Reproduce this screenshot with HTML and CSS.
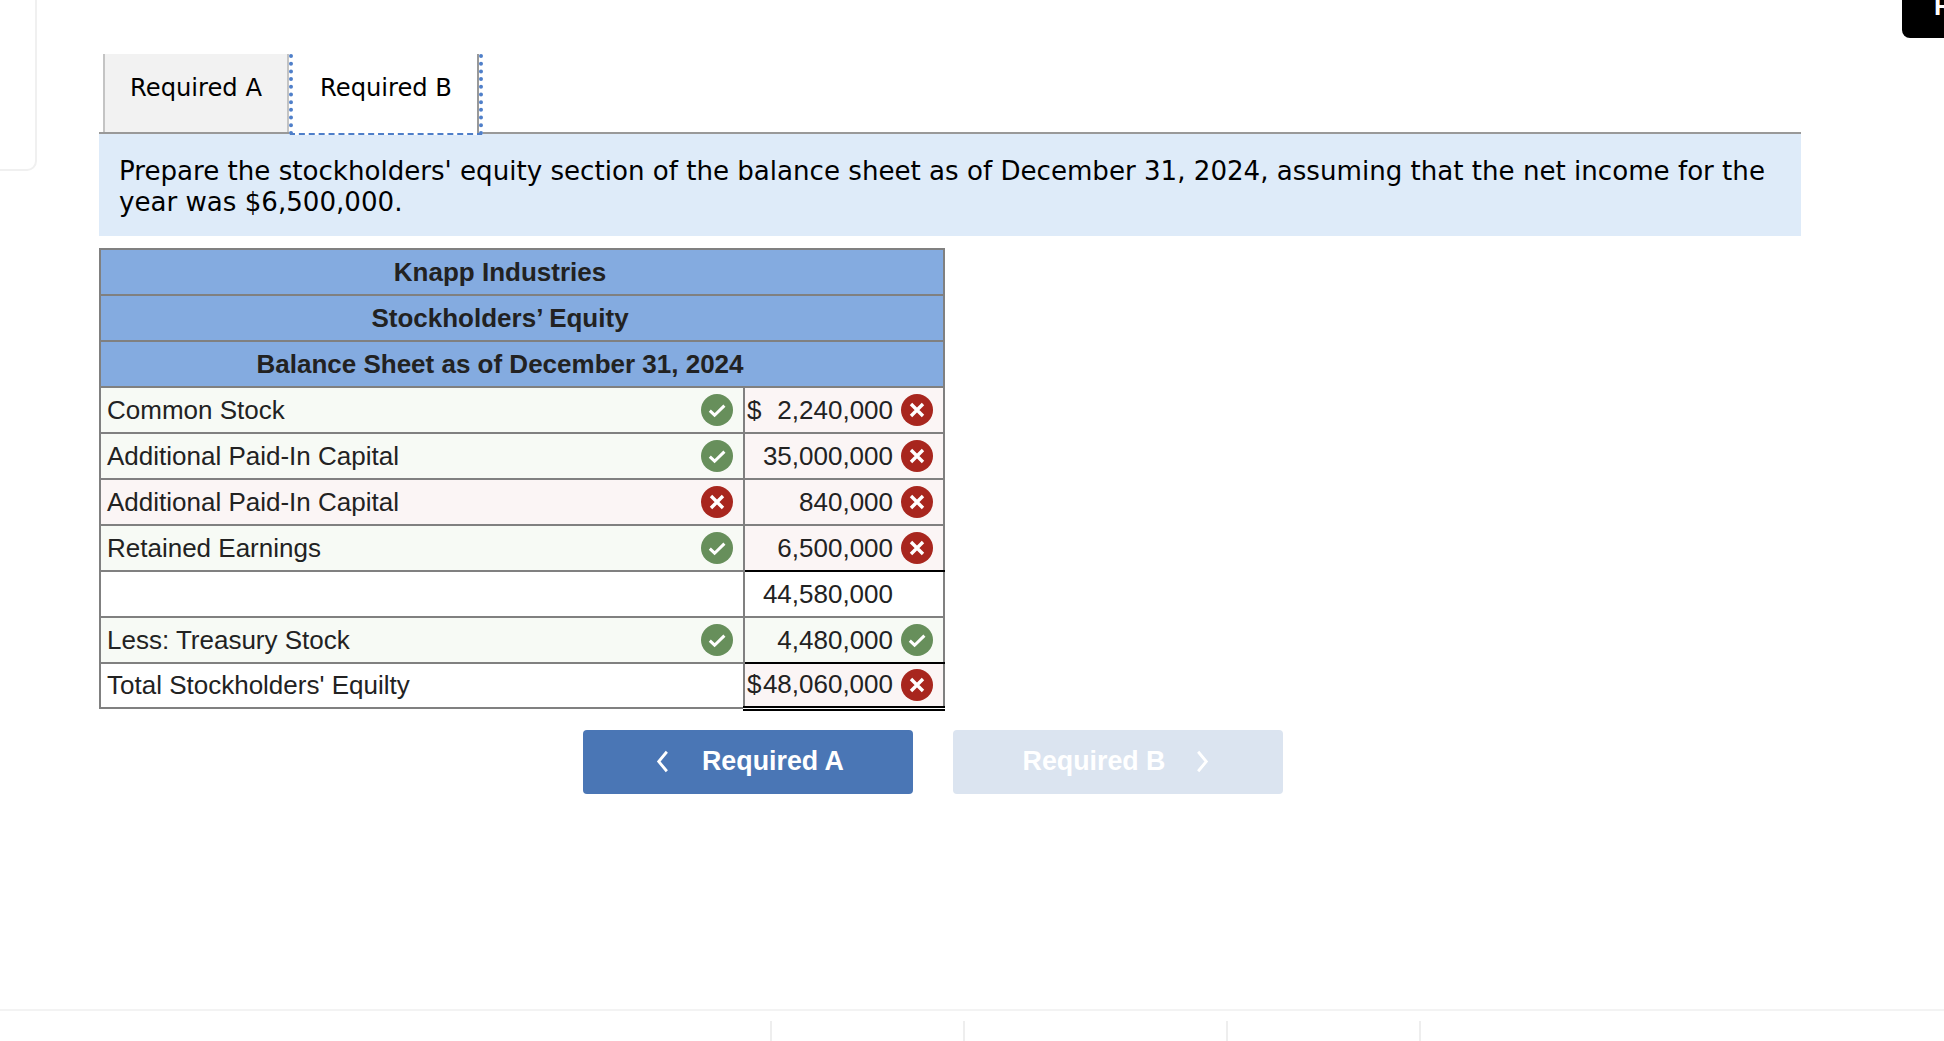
FILE: index.html
```html
<!DOCTYPE html>
<html lang="en">
<head>
<meta charset="utf-8">
<title>Required B</title>
<link rel="stylesheet" href="styles.css">
</head>
<body>
<svg class="defs" width="0" height="0" aria-hidden="true">
  <symbol id="ok" viewBox="0 0 32 32"><circle cx="16" cy="16" r="16" fill="#678f5b"/><path d="M8.8 16.6l4.8 4.6 9.8-9.6" fill="none" stroke="#fff" stroke-width="3"/></symbol>
  <symbol id="bad" viewBox="0 0 32 32"><circle cx="16" cy="16" r="16" fill="#a8261e"/><path d="M10 10l12 12M22 10L10 22" fill="none" stroke="#fff" stroke-width="3.4"/></symbol>
</svg>
<div class="side-card"></div>
<div class="corner-btn"><span>R</span></div>
<main class="main">
  <div class="tabs">
    <div class="tab tab-a">Required A</div>
    <div class="tab tab-b">Required B</div>
  </div>
  <div class="prompt">Prepare the stockholders' equity section of the balance sheet as of December 31, 2024, assuming that the net income for the year was $6,500,000.</div>
  <table class="sheet">
    <colgroup><col class="c-label"><col class="c-value"></colgroup>
    <thead>
      <tr><th colspan="2">Knapp Industries</th></tr>
      <tr><th colspan="2">Stockholders’ Equity</th></tr>
      <tr><th colspan="2">Balance Sheet as of December 31, 2024</th></tr>
    </thead>
    <tbody>
      <tr>
        <td class="label good"><div class="cell"><span>Common Stock</span><svg class="mark"><use href="#ok"/></svg></div></td>
        <td class="value wrong"><div class="cell"><span class="cur">$</span><span class="num">2,240,000</span><svg class="mark"><use href="#bad"/></svg></div></td>
      </tr>
      <tr>
        <td class="label good"><div class="cell"><span>Additional Paid-In Capital</span><svg class="mark"><use href="#ok"/></svg></div></td>
        <td class="value wrong"><div class="cell"><span class="num">35,000,000</span><svg class="mark"><use href="#bad"/></svg></div></td>
      </tr>
      <tr>
        <td class="label wrong"><div class="cell"><span>Additional Paid-In Capital</span><svg class="mark"><use href="#bad"/></svg></div></td>
        <td class="value wrong"><div class="cell"><span class="num">840,000</span><svg class="mark"><use href="#bad"/></svg></div></td>
      </tr>
      <tr>
        <td class="label good"><div class="cell"><span>Retained Earnings</span><svg class="mark"><use href="#ok"/></svg></div></td>
        <td class="value wrong rule-b"><div class="cell"><span class="num">6,500,000</span><svg class="mark"><use href="#bad"/></svg></div></td>
      </tr>
      <tr>
        <td class="label"></td>
        <td class="value"><div class="cell"><span class="num">44,580,000</span><span class="mark"></span></div></td>
      </tr>
      <tr>
        <td class="label good"><div class="cell"><span>Less: Treasury Stock</span><svg class="mark"><use href="#ok"/></svg></div></td>
        <td class="value good rule-b"><div class="cell"><span class="num">4,480,000</span><svg class="mark"><use href="#ok"/></svg></div></td>
      </tr>
      <tr class="last">
        <td class="label"><div class="cell"><span>Total Stockholders' Equilty</span></div></td>
        <td class="value wrong total"><div class="cell"><span class="cur tight">$</span><span class="num">48,060,000</span><svg class="mark"><use href="#bad"/></svg></div></td>
      </tr>
    </tbody>
  </table>
  <div class="nav">
    <button class="nav-btn prev" type="button">
      <svg class="chev" viewBox="0 0 12 20"><path d="M10 1L2.5 10l7.5 9" fill="none" stroke="#fff" stroke-width="2.6"/></svg>
      <span>Required A</span>
    </button>
    <button class="nav-btn next" type="button">
      <span>Required B</span>
      <svg class="chev" viewBox="0 0 12 20"><path d="M2 1l7.5 9L2 19" fill="none" stroke="#fff" stroke-width="2.6"/></svg>
    </button>
  </div>
</main>
<footer class="foot">
  <i class="tick"></i><i class="tick"></i><i class="tick"></i><i class="tick"></i>
</footer>
</body>
</html>
```

FILE: styles.css
```css
* { box-sizing: border-box; }
html, body { margin: 0; height: 1041px; overflow: hidden; background: #fff; }
body { position: relative; font-family: "Liberation Sans", Arial, sans-serif; color: #222; }
.defs { position: absolute; }

.side-card {
  position: absolute; left: -20px; top: -20px; width: 57px; height: 191px;
  border: 2px solid #f0f0f0; border-radius: 10px;
}
.corner-btn {
  position: absolute; right: 0; top: 0; width: 42px; height: 38px; overflow: hidden;
  background: #000; border-bottom-left-radius: 8px;
}
.corner-btn span {
  position: absolute; left: 32px; top: -9px; color: #fff;
  font-size: 26px; font-weight: 700; line-height: 30px;
}

.main { width: 1801px; height: 1009px; padding: 54px 0 0 99px; }

.tabs { display: flex; height: 78px; padding-left: 4px; }
.tab {
  font-family: "DejaVu Sans", Verdana, sans-serif; font-size: 24.2px; line-height: 30px; color: #000;
  padding-top: 19px; height: 78px; text-align: center;
}
.tab-a { width: 186px; background: #f2f2f2; border-left: 2px solid #c4c4c4; border-right: 2px solid #c4c4c4; }
.tab-b {
  width: 194px; position: relative; background: #fff; margin-bottom: -3px; height: 81px;
  border-left: 4px dotted #4f7fc9; border-right: 4px dotted #4f7fc9; border-bottom: 2px dashed #4f7fc9;
  box-shadow: inset -2px 0 0 #999;
}

.prompt {
  height: 104px; padding: 22px 20px 0;
  background: #deebf9; border-top: 2px solid #999;
  font-family: "DejaVu Sans", Verdana, sans-serif; font-size: 26.1px; line-height: 31px; color: #000;
}

.sheet {
  margin-top: 12px; width: 844px; table-layout: fixed; border-collapse: collapse;
  font-size: 26px; color: #222;
}
.c-label { width: 644px; }
.c-value { width: 200px; }
.sheet th, .sheet td { height: 46px; padding: 0; border: 2px solid #808080; }
.sheet th { background: #84abe0; font-weight: 700; text-align: center; padding-right: 44px; }
.cell { display: flex; align-items: center; height: 44px; padding: 0 10px 0 6px; }
.label .cell > span:first-child { flex: 1; }
.value .cell { padding: 0 10px 0 2px; }
.cur { margin-right: auto; }
.num { margin-left: auto; }
.mark { flex: none; width: 32px; height: 32px; margin-left: 8px; display: block; }
.label .mark { margin-left: 0; }
.good { background: #f7faf5; }
.wrong { background: #fbf5f5; }
.sheet .rule-b { border-bottom-color: #000; }
.sheet .total { border-bottom: 5px double #000; }
.last td { height: 45px; }
.last .value .cell { height: 40px; }
.last .label .cell { height: 42px; }
.tight { margin-right: 0; }

.nav { display: flex; gap: 40px; margin: 19px 0 0 484px; }
.nav-btn {
  width: 330px; height: 64px; border: 0; border-radius: 4px; padding: 0;
  display: flex; align-items: center; justify-content: center;
  font-family: "Liberation Sans", Arial, sans-serif; font-size: 26.8px; font-weight: 700; color: #fff;
}
.prev { background: #4a76b5; gap: 33px; padding-left: 4px; }
.next { background: #dbe4f0; gap: 31px; padding-right: 4px; }
.chev { width: 13px; height: 23px; flex: none; }

.foot {
  height: 32px; border-top: 2px solid #f3f3f3; padding: 10px 0 0 770px;
  display: flex;
}
.tick { width: 2px; height: 20px; background: #eee; }
.tick:nth-child(1) { margin-right: 191px; }
.tick:nth-child(2) { margin-right: 261px; }
.tick:nth-child(3) { margin-right: 191px; }
```
